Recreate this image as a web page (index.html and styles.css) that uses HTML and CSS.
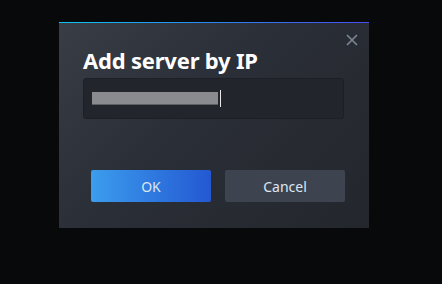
FILE: index.html
```html
<!DOCTYPE html>
<html>
<head>
<meta charset="utf-8">
<link rel="stylesheet" href="styles.css">
</head>
<body>
<div class="dialog">
  <div class="close" aria-label="Close">
    <svg width="12" height="12" viewBox="0 0 12 12"><path d="M1 1L11 11M11 1L1 11" stroke="#7d8894" stroke-width="1.6" fill="none"/></svg>
  </div>
  <h1 class="title">Add server by IP</h1>
  <div class="input">
    <span class="redacted"></span><span class="caret"></span>
  </div>
  <div class="actions">
    <button class="btn ok">OK</button>
    <button class="btn cancel">Cancel</button>
  </div>
</div>
</body>
</html>
```
FILE: styles.css
```css
html, body { margin: 0; padding: 0; }
body {
  width: 442px; height: 284px;
  background: #08090b;
  font-family: "Noto Sans", "Open Sans", sans-serif;
  padding-top: 22px;
  box-sizing: border-box;
}
.dialog {
  position: relative;
  margin-left: 59px;
  width: 310px;
  height: 206px;
  box-sizing: border-box;
  background:
    linear-gradient(90deg, #10c4f0 0%, #2a86f0 50%, #4a4cf2 100%) top left / 100% 1px no-repeat,
    linear-gradient(135deg, #383d46 0%, #2a2e36 45%, #23262d 100%);
  padding: 23px 24px 0 24px;
}
.close {
  position: absolute;
  right: 11px; top: 12px;
  width: 12px; height: 12px;
  line-height: 0;
}
.title {
  margin: 0;
  color: #ffffff;
  font-size: 22px;
  font-weight: 700;
  line-height: 30px;
  letter-spacing: -0.2px;
}
.input {
  margin-top: 3px;
  width: 261px;
  height: 41px;
  box-sizing: border-box;
  background: #22252c;
  border: 1px solid #1c1f25;
  border-radius: 3px;
  display: flex;
  align-items: center;
  padding-left: 8px;
}
.redacted {
  display: block;
  width: 126px; height: 13px;
  background: #8a8b8e;
  border-bottom: 1px solid #5d5f63;
  box-sizing: border-box;
}
.caret {
  display: block;
  width: 1px; height: 17px;
  margin-left: 2px;
  background: #e8e8e8;
}
.actions {
  display: flex;
  gap: 14px;
  margin-top: 51px;
  padding-left: 8px;
}
.btn {
  width: 120px; height: 32px;
  border: none;
  border-radius: 2px;
  font-family: "Noto Sans", "Open Sans", sans-serif;
  font-size: 14px;
  color: #dde6f0;
  padding: 0;
}
.ok { background: linear-gradient(90deg, #3c9ded 0%, #2f7ae0 50%, #2458d2 100%); }
.cancel { background: #3d4450; }
```
